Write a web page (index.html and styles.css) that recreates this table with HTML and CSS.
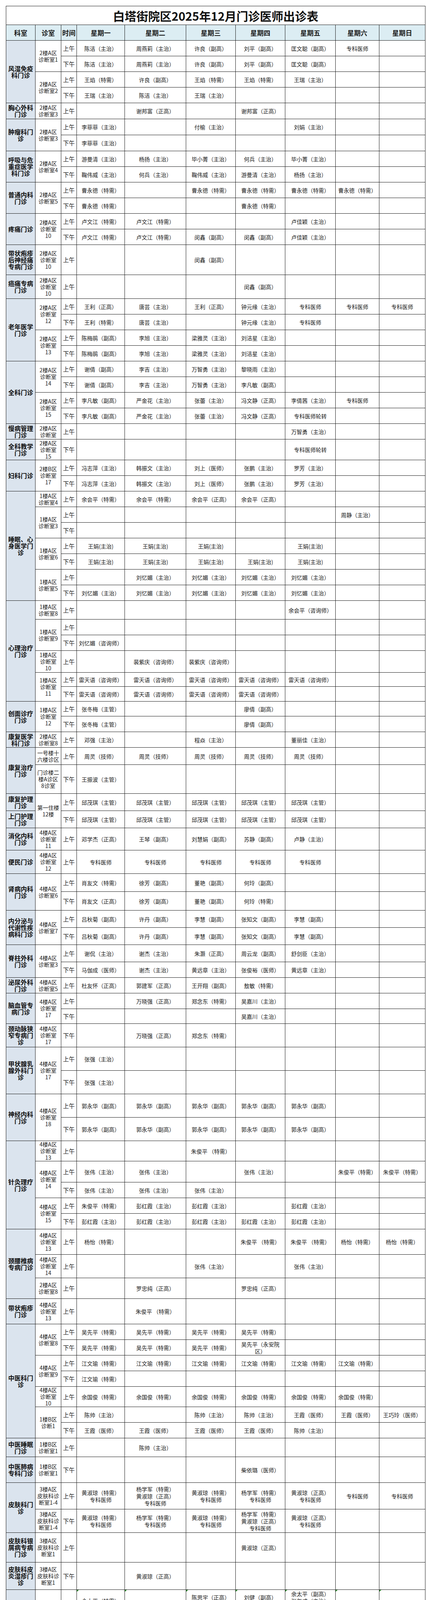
FILE: index.html
```html
<!DOCTYPE html>
<html lang="zh-CN">
<head>
<meta charset="utf-8">
<title>白塔街院区2025年12月门诊医师出诊表</title>
<link rel="stylesheet" href="styles.css">
</head>
<body>
<div class="sheet">
<table class="roster">
<colgroup>
<col class="c-dept"><col class="c-room"><col class="c-time"><col class="c-mon"><col class="c-tue"><col class="c-wed"><col class="c-thu"><col class="c-fri"><col class="c-sat"><col class="c-sun">
</colgroup>
<tbody>
<tr class="title h48"><td colspan="10">白塔街院区2025年12月门诊医师出诊表</td></tr>
<tr class="head h40"><td>科室</td><td>诊室</td><td>时间</td><td>星期一</td><td>星期二</td><td>星期三</td><td>星期四</td><td>星期五</td><td>星期六</td><td>星期日</td></tr>

<tr class="h40"><td class="d" rowspan="4">风湿免疫科门诊</td><td class="r" rowspan="2">2楼A区<br>诊断室1</td><td class="t">上午</td><td>陈洁（主治）</td><td>周燕莉（主治）</td><td>许良（副高）</td><td>刘平（副高）</td><td>匡文聪（副高）</td><td>专科医师</td><td></td></tr>
<tr class="h40"><td class="t">下午</td><td>陈洁（主治）</td><td>周燕莉（主治）</td><td>许良（副高）</td><td>刘平（副高）</td><td>匡文聪（副高）</td><td></td><td></td></tr>
<tr class="h40"><td class="r" rowspan="2">2楼A区<br>诊断室2</td><td class="t">上午</td><td>王焰（特需）</td><td>许良（副高）</td><td>王焰（特需）</td><td>王焰（特需）</td><td>王瑞（主治）</td><td></td><td></td></tr>
<tr class="h40"><td class="t">下午</td><td>王瑞（主治）</td><td>陈洁（主治）</td><td>王瑞（主治）</td><td></td><td></td><td></td><td></td></tr>

<tr class="h41"><td class="d">胸心外科门诊</td><td class="r">2楼A区<br>诊断室3</td><td class="t">上午</td><td></td><td>谢邦富（正高）</td><td></td><td>谢邦富（正高）</td><td></td><td></td><td></td></tr>

<tr class="h41"><td class="d" rowspan="2">肿瘤科门诊</td><td class="r" rowspan="2">2楼A区<br>诊断室3</td><td class="t">上午</td><td>李菲菲（主治）</td><td></td><td>付榆（主治）</td><td></td><td>刘娟（主治）</td><td></td><td></td></tr>
<tr class="h41"><td class="t">下午</td><td>李菲菲（主治）</td><td></td><td></td><td></td><td></td><td></td><td></td></tr>

<tr class="h40"><td class="d" rowspan="2">呼吸与危重症医学科门诊</td><td class="r" rowspan="2">2楼A区<br>诊断室4</td><td class="t">上午</td><td>游曼清（主治）</td><td>杨扬（主治）</td><td>毕小菁（主治）</td><td>何兵（主治）</td><td>毕小菁（主治）</td><td></td><td></td></tr>
<tr class="h40"><td class="t">下午</td><td>鞠伟威（主治）</td><td>何兵（主治）</td><td>鞠伟威（主治）</td><td>游曼清（主治）</td><td>杨扬（主治）</td><td></td><td></td></tr>

<tr class="h40"><td class="d" rowspan="2">普通内科门诊</td><td class="r" rowspan="2">2楼A区<br>诊断室5</td><td class="t">上午</td><td>曹永德（特需）</td><td></td><td>曹永德（特需）</td><td>曹永德（特需）</td><td>曹永德（特需）</td><td>曹永德（特需）</td><td></td></tr>
<tr class="h40"><td class="t">下午</td><td>曹永德（特需）</td><td></td><td></td><td>曹永德（特需）</td><td></td><td></td><td></td></tr>

<tr class="h40"><td class="d" rowspan="2">疼痛门诊</td><td class="r" rowspan="2">2楼A区<br>诊断室<br>10</td><td class="t">上午</td><td>卢文江（特需）</td><td>卢文江（特需）</td><td></td><td></td><td>卢佳颖（主治）</td><td></td><td></td></tr>
<tr class="h40"><td class="t">下午</td><td>卢文江（特需）</td><td>卢文江（特需）</td><td>闵鑫（副高）</td><td>闵鑫（副高）</td><td>卢佳颖（主治）</td><td></td><td></td></tr>

<tr class="h77"><td class="d">带状疱疹后神经痛专病门诊</td><td class="r">2楼A区<br>诊断室<br>10</td><td class="t">上午</td><td></td><td></td><td>闵鑫（副高）</td><td></td><td></td><td></td><td></td></tr>

<tr class="h61"><td class="d">癌痛专病门诊</td><td class="r">2楼A区<br>诊断室<br>10</td><td class="t">上午</td><td></td><td></td><td></td><td>闵鑫（副高）</td><td></td><td></td><td></td></tr>

<tr class="h40"><td class="d" rowspan="4">老年医学门诊</td><td class="r" rowspan="2">2楼A区<br>诊断室<br>12</td><td class="t">上午</td><td>王利（正高）</td><td>唐芸（主治）</td><td>王利（正高）</td><td>钟元缘（主治）</td><td>专科医师</td><td>专科医师</td><td>专科医师</td></tr>
<tr class="h40"><td class="t">下午</td><td>王利（特需）</td><td>唐芸（主治）</td><td></td><td>钟元缘（主治）</td><td>专科医师</td><td></td><td></td></tr>
<tr class="h40"><td class="r" rowspan="2">2楼A区<br>诊断室<br>13</td><td class="t">上午</td><td>陈梅鹃（副高）</td><td>李旭（主治）</td><td>梁雅灵（主治）</td><td>刘洁星（主治）</td><td></td><td></td><td></td></tr>
<tr class="h40"><td class="t">下午</td><td>陈梅鹃（副高）</td><td>李旭（主治）</td><td>梁雅灵（主治）</td><td>刘洁星（主治）</td><td></td><td></td><td></td></tr>

<tr class="h40"><td class="d" rowspan="4">全科门诊</td><td class="r" rowspan="2">2楼A区<br>诊断室<br>14</td><td class="t">上午</td><td>谢倩（副高）</td><td>李吉（主治）</td><td>万智勇（主治）</td><td>黎晓雨（主治）</td><td></td><td></td><td></td></tr>
<tr class="h40"><td class="t">下午</td><td>谢倩（副高）</td><td>李吉（主治）</td><td>万智勇（主治）</td><td>李凡敏（副高）</td><td></td><td></td><td></td></tr>
<tr class="h40"><td class="r" rowspan="2">2楼A区<br>诊断室<br>15</td><td class="t">上午</td><td>李凡敏（副高）</td><td>严金花（主治）</td><td>张蕾（主治）</td><td>冯文静（正高）</td><td>李倩茜（主治）</td><td>专科医师</td><td></td></tr>
<tr class="h40"><td class="t">下午</td><td>李凡敏（副高）</td><td>严金花（主治）</td><td>张蕾（主治）</td><td>冯文静（正高）</td><td>专科医师轮转</td><td></td><td></td></tr>

<tr class="h40"><td class="d">慢病管理门诊</td><td class="r">2楼A区<br>诊断室</td><td class="t">上午</td><td></td><td></td><td></td><td></td><td>万智勇（主治）</td><td></td><td></td></tr>

<tr class="h53"><td class="d">全科教学门诊</td><td class="r">2楼A区<br>诊断室<br>15</td><td class="t">下午</td><td></td><td></td><td></td><td></td><td>专科医师轮转</td><td></td><td></td></tr>

<tr class="h40"><td class="d" rowspan="2">妇科门诊</td><td class="r" rowspan="2">2楼B区<br>诊断室<br>17</td><td class="t">上午</td><td>冯志萍（主治）</td><td>韩振文（主治）</td><td>刘上（医师）</td><td>张鹏（主治）</td><td>罗芳（主治）</td><td></td><td></td></tr>
<tr class="h40"><td class="t">下午</td><td>冯志萍（主治）</td><td>韩振文（主治）</td><td>刘上（医师）</td><td>张鹏（主治）</td><td>罗芳（主治）</td><td></td><td></td></tr>

<tr class="h40"><td class="d" rowspan="7">睡眠、心身医学门诊</td><td class="r">1楼A区<br>诊断室4</td><td class="t">上午</td><td>余会平（特需）</td><td>余会平（特需）</td><td>余会平（正高）</td><td>余会平（正高）</td><td></td><td></td><td></td></tr>
<tr class="h40"><td class="r" rowspan="2">1楼A区<br>诊断室3</td><td class="t">上午</td><td></td><td></td><td></td><td></td><td></td><td>周静（主治）</td><td></td></tr>
<tr class="h40"><td class="t">下午</td><td></td><td></td><td></td><td></td><td></td><td></td><td></td></tr>
<tr class="h40"><td class="r" rowspan="2">1楼A区<br>诊断室6</td><td class="t">上午</td><td>王娟(主治)</td><td>王娟(主治)</td><td>王娟(主治)</td><td></td><td>王娟(主治)</td><td></td><td></td></tr>
<tr class="h40"><td class="t">下午</td><td>王娟(主治)</td><td>王娟(主治)</td><td>王娟(主治)</td><td>王娟(主治)</td><td>王娟(主治)</td><td></td><td></td></tr>
<tr class="h40"><td class="r" rowspan="2">1楼A区<br>诊断室5</td><td class="t">上午</td><td></td><td>刘忆媚（主治）</td><td>刘忆媚（主治）</td><td>刘忆媚（主治）</td><td>刘忆媚（主治）</td><td></td><td></td></tr>
<tr class="h40"><td class="t">下午</td><td>刘忆媚（主治）</td><td>刘忆媚（主治）</td><td>刘忆媚（主治）</td><td>刘忆媚（主治）</td><td>刘忆媚（主治）</td><td></td><td></td></tr>

<tr class="h48"><td class="d" rowspan="6">心理治疗门诊</td><td class="r">1楼A区<br>诊断室8</td><td class="t">上午</td><td></td><td></td><td></td><td></td><td>余会平（咨询师）</td><td></td><td></td></tr>
<tr class="h40"><td class="r" rowspan="2">1楼A区<br>诊断室9</td><td class="t">上午</td><td></td><td></td><td></td><td></td><td></td><td></td><td></td></tr>
<tr class="h40"><td class="t">下午</td><td>刘忆媚（咨询师）</td><td></td><td></td><td></td><td></td><td></td><td></td></tr>
<tr class="h56"><td class="r">1楼A区<br>诊断室<br>10</td><td class="t">上午</td><td></td><td>裴紫庆（咨询师）</td><td>裴紫庆（咨询师）</td><td></td><td></td><td></td><td></td></tr>
<tr class="h36"><td class="r" rowspan="2">1楼A区<br>诊断室<br>11</td><td class="t">上午</td><td>雷天语（咨询师）</td><td>雷天语（咨询师）</td><td>雷天语（咨询师）</td><td>雷天语（咨询师）</td><td>雷天语（咨询师）</td><td></td><td></td></tr>
<tr class="h38"><td class="t">下午</td><td>雷天语（咨询师）</td><td>雷天语（咨询师）</td><td>雷天语（咨询师）</td><td>雷天语（咨询师）</td><td></td><td></td><td></td></tr>

<tr class="h38"><td class="d" rowspan="2">创面诊疗门诊</td><td class="r" rowspan="2">1楼A区<br>诊断室<br>12</td><td class="t">上午</td><td>张冬梅（主管）</td><td></td><td></td><td>廖倩（副高）</td><td></td><td></td><td></td></tr>
<tr class="h40"><td class="t">下午</td><td>张冬梅（主管）</td><td></td><td></td><td>廖倩（副高）</td><td></td><td></td><td></td></tr>

<tr class="h40"><td class="d">康复医学科门诊</td><td class="r">2楼A区<br>诊断室8</td><td class="t">上午</td><td>邓强（主治）</td><td></td><td>程焱（主治）</td><td></td><td>董丽佳（主治）</td><td></td><td></td></tr>

<tr class="h44"><td class="d" rowspan="2">康复治疗门诊</td><td class="r">一号楼十<br>六楼诊区</td><td class="t">上午</td><td>周灵（技师）</td><td>周灵（技师）</td><td>周灵（技师）</td><td>周灵（技师）</td><td>周灵（技师）</td><td></td><td></td></tr>
<tr class="h74"><td class="r">门诊楼二<br>楼A诊区<br>8诊室</td><td class="t">下午</td><td>王振波（主管）</td><td></td><td></td><td></td><td></td><td></td><td></td></tr>

<tr class="h44"><td class="d">康复护理门诊</td><td class="r" rowspan="2">第一住楼<br>12楼</td><td class="t">上午</td><td>邱茂琪（主管）</td><td>邱茂琪（主管）</td><td>邱茂琪（主管）</td><td>邱茂琪（主管）</td><td>邱茂琪（主管）</td><td></td><td></td></tr>
<tr class="h44"><td class="d">上门护理门诊</td><td class="t">下午</td><td>邱茂琪（主管）</td><td>邱茂琪（主管）</td><td>邱茂琪（主管）</td><td>邱茂琪（主管）</td><td>邱茂琪（主管）</td><td></td><td></td></tr>

<tr class="h57"><td class="d">消化内科门诊</td><td class="r">4楼A区<br>诊断室<br>11</td><td class="t">上午</td><td>邓学杰（正高）</td><td>王琴（副高）</td><td>刘慧娟（副高）</td><td>苏静（副高）</td><td>卢静（主治）</td><td></td><td></td></tr>

<tr class="h60"><td class="d">便民门诊</td><td class="r">4楼A区<br>诊断室<br>12</td><td class="t">上午</td><td>专科医师</td><td>专科医师</td><td>专科医师</td><td>专科医师</td><td>专科医师</td><td></td><td></td></tr>

<tr class="h46"><td class="d" rowspan="2">肾病内科门诊</td><td class="r" rowspan="2">4楼A区<br>诊断室6</td><td class="t">上午</td><td>肖友文（特需）</td><td>徐芳（副高）</td><td>董艳（副高）</td><td>何玲（副高）</td><td></td><td></td><td></td></tr>
<tr class="h48"><td class="t">下午</td><td>肖友文（正高）</td><td>徐芳（副高）</td><td>董艳（副高）</td><td>何玲（特需）</td><td></td><td></td><td></td></tr>

<tr class="h44"><td class="d" rowspan="2">内分泌与代谢性疾病科门诊</td><td class="r" rowspan="2">4楼A区<br>诊断室7</td><td class="t">上午</td><td>吕秋菊（副高）</td><td>许丹（副高）</td><td>李慧（副高）</td><td>张知文（副高）</td><td>李慧（副高）</td><td></td><td></td></tr>
<tr class="h44"><td class="t">下午</td><td>吕秋菊（副高）</td><td>许丹（副高）</td><td>李慧（副高）</td><td>张知文（副高）</td><td>李慧（副高）</td><td></td><td></td></tr>

<tr class="h44"><td class="d" rowspan="2">脊柱外科门诊</td><td class="r" rowspan="2">4楼A区<br>诊断室3</td><td class="t">上午</td><td>谢侃（主治）</td><td>谢杰（主治）</td><td>朱灏（正高）</td><td>周云龙（副高）</td><td>舒剑臣（主治）</td><td></td><td></td></tr>
<tr class="h40"><td class="t">下午</td><td>马伽成（医师）</td><td>谢杰（主治）</td><td>黄远章（主治）</td><td>张俊裕（医师）</td><td>黄远章（主治）</td><td></td><td></td></tr>

<tr class="h40"><td class="d">泌尿外科门诊</td><td class="r">4楼A区<br>诊断室5</td><td class="t">上午</td><td>杜友怀（正高）</td><td>郭建军（正高）</td><td>王开翔（副高）</td><td>敖敏（特需）</td><td></td><td></td><td></td></tr>

<tr class="h40"><td class="d" rowspan="2">脑血管专病门诊</td><td class="r" rowspan="2">4楼A区<br>诊断室<br>17</td><td class="t">上午</td><td></td><td>万晓强（正高）</td><td>郑念东（特需）</td><td>吴嘉川（主治）</td><td></td><td></td><td></td></tr>
<tr class="h38"><td class="t">下午</td><td></td><td></td><td></td><td>吴嘉川（主治）</td><td></td><td></td><td></td></tr>

<tr class="h60"><td class="d">颈动脉狭窄专病门诊</td><td class="r">4楼A区<br>诊断室<br>17</td><td class="t">下午</td><td></td><td>万晓强（正高）</td><td>郑念东（特需）</td><td></td><td></td><td></td><td></td></tr>

<tr class="h60"><td class="d" rowspan="2">甲状腺乳腺外科门诊</td><td class="r" rowspan="2">4楼A区<br>诊断室<br>17</td><td class="t">上午</td><td>张强（主治）</td><td></td><td></td><td></td><td></td><td></td><td></td></tr>
<tr class="h60"><td class="t">下午</td><td>张强（主治）</td><td></td><td></td><td></td><td></td><td></td><td></td></tr>

<tr class="h60"><td class="d" rowspan="2">神经内科门诊</td><td class="r" rowspan="2">4楼A区<br>诊断室<br>18</td><td class="t">上午</td><td>郭永华（副高）</td><td>郭永华（副高）</td><td>郭永华（副高）</td><td>郭永华（副高）</td><td>郭永华（副高）</td><td></td><td></td></tr>
<tr class="h60"><td class="t">下午</td><td>郭永华（副高）</td><td>郭永华（副高）</td><td>郭永华（副高）</td><td>郭永华（副高）</td><td>郭永华（副高）</td><td></td><td></td></tr>

<tr class="h52"><td class="d" rowspan="5">针灸理疗门诊</td><td class="r">4楼A区<br>诊断室<br>13</td><td class="t">上午</td><td></td><td></td><td>朱俊平 （特需）</td><td></td><td></td><td></td><td></td></tr>
<tr class="h54"><td class="r" rowspan="2">4楼A区<br>诊断室<br>14</td><td class="t">上午</td><td>张伟（主治）</td><td>张伟（主治）</td><td></td><td>张伟（主治）</td><td></td><td>朱俊平（特需）</td><td>朱俊平（特需）</td></tr>
<tr class="h40"><td class="t">下午</td><td>张伟（主治）</td><td>张伟（主治）</td><td>张伟（主治）</td><td></td><td></td><td></td><td></td></tr>
<tr class="h40"><td class="r" rowspan="2">4楼A区<br>诊断室<br>15</td><td class="t">上午</td><td>朱俊平（特需）</td><td>彭红霞（主治）</td><td>彭红霞（主治）</td><td></td><td>彭红霞（主治）</td><td></td><td></td></tr>
<tr class="h40"><td class="t">下午</td><td>彭红霞（主治）</td><td>彭红霞（主治）</td><td>彭红霞（主治）</td><td>彭红霞（主治）</td><td>彭红霞（主治）</td><td></td><td></td></tr>

<tr class="h65"><td class="d" rowspan="3">颈腰椎病专病门诊</td><td class="r">4楼A区<br>诊断室<br>13</td><td class="t">上午</td><td>杨怡（特需）</td><td></td><td></td><td>朱俊平 （特需）</td><td>朱俊平 （特需）</td><td>杨怡（特需）</td><td>杨怡（特需）</td></tr>
<tr class="h60"><td class="r">4楼A区<br>诊断室<br>14</td><td class="t">上午</td><td></td><td></td><td>张伟（主治）</td><td></td><td>张伟（主治）</td><td></td><td></td></tr>
<tr class="h53"><td class="r">2楼A区<br>诊断室8</td><td class="t">上午</td><td></td><td>罗忠纯（正高）</td><td></td><td>罗忠纯（正高）</td><td></td><td></td><td></td></tr>

<tr class="h65"><td class="d">带状疱疹门诊</td><td class="r">4楼A区<br>诊断室<br>13</td><td class="t">上午</td><td></td><td>朱俊平 （特需）</td><td></td><td></td><td></td><td></td><td></td></tr>

<tr class="h40"><td class="d" rowspan="7">中医科门诊</td><td class="r" rowspan="2">4楼A区<br>诊断室8</td><td class="t">上午</td><td>吴先平（特需）</td><td>吴先平（特需）</td><td>吴先平（特需）</td><td>吴先平（特需）</td><td></td><td></td><td></td></tr>
<tr class="h40"><td class="t">下午</td><td>吴先平（特需）</td><td>吴先平（特需）</td><td>吴先平（特需）</td><td>吴先平（永安院<br>区）</td><td></td><td></td><td></td></tr>
<tr class="h40"><td class="r" rowspan="2">4楼A区<br>诊断室9</td><td class="t">上午</td><td>江文瑜（特需）</td><td>江文瑜（特需）</td><td>江文瑜（特需）</td><td>江文瑜（特需）</td><td>江文瑜（特需）</td><td>江文瑜（特需）</td><td></td></tr>
<tr class="h40"><td class="t">下午</td><td>江文瑜（特需）</td><td></td><td></td><td></td><td></td><td></td><td></td></tr>
<tr class="h52"><td class="r">4楼A区<br>诊断室<br>10</td><td class="t">上午</td><td>余国俊（特需）</td><td>余国俊（特需）</td><td>余国俊（特需）</td><td>余国俊（特需）</td><td>余国俊（特需）</td><td>余国俊（特需）</td><td></td></tr>
<tr class="h40"><td class="r" rowspan="2">1楼B区<br>诊断1</td><td class="t">上午</td><td>陈帅（主治）</td><td></td><td>陈帅（主治）</td><td>陈帅（主治）</td><td>王霞（医师）</td><td>王霞（医师）</td><td>王巧玲（医师）</td></tr>
<tr class="h40"><td class="t">下午</td><td>王霞（医师）</td><td>王霞（医师）</td><td>王霞（医师）</td><td>王霞（医师）</td><td>陈帅（主治）</td><td></td><td></td></tr>

<tr class="h48"><td class="d">中医睡眠门诊</td><td class="r">1楼B区<br>诊断室1</td><td class="t">上午</td><td></td><td>陈帅（主治）</td><td></td><td></td><td></td><td></td><td></td></tr>

<tr class="h66"><td class="d">中医肺病专科门诊</td><td class="r">1楼B区<br>诊断室1</td><td class="t">下午</td><td></td><td></td><td></td><td>柴依璐（医师）</td><td></td><td></td><td></td></tr>

<tr class="h68"><td class="d" rowspan="2">皮肤科门诊</td><td class="r">3楼A区<br>皮肤科诊<br>断室1-4</td><td class="t">上午</td><td>黄淑琼（特需）<br>专科医师</td><td>杨学军（特需）<br>黄淑琼（正高）<br>专科医师</td><td>黄淑琼（特需）<br>专科医师</td><td>杨学军（特需）<br>专科医师</td><td>黄淑琼（正高）<br>专科医师</td><td>专科医师</td><td>专科医师</td></tr>
<tr class="h60"><td class="r">3楼A区<br>皮肤科诊<br>断室1-4</td><td class="t">下午</td><td>黄淑琼（特需）<br>专科医师</td><td>杨学军（特需）<br>专科医师</td><td>黄淑琼（特需）<br>专科医师</td><td>杨学军（特需）<br>黄淑琼（正高）<br>专科医师</td><td>黄淑琼（正高）<br>专科医师</td><td></td><td></td></tr>

<tr class="h76"><td class="d">皮肤科银屑病专病门诊</td><td class="r">3楼A区<br>皮肤科诊<br>断室1</td><td class="t">上午</td><td></td><td></td><td></td><td>黄淑琼（正高）</td><td></td><td></td><td></td></tr>

<tr class="h70"><td class="d">皮肤科皮炎湿疹门诊</td><td class="r">3楼A区<br>皮肤科诊<br>断室1</td><td class="t">下午</td><td></td><td>黄淑琼（正高）</td><td></td><td></td><td></td><td></td><td></td></tr>

<tr class="h128"><td class="d" rowspan="2">口腔科门诊</td><td class="r" rowspan="2">3楼B区<br>口腔诊断<br>室</td><td class="t">上午</td><td class="cm">余太平（特需）<br>刘健（副高）<br>陈思宇（正高）<br>兰竺（主治）<br>专科医师</td><td class="cm">刘健（副高）<br>陈思宇（正高）<br>兰竺（主治）<br>专科医生</td><td class="cm">陈思宇（正高）<br>尹鹏（主治）<br>张年成（主治）<br>潘莲（主治）<br>季于琪（主治）<br>专科医师</td><td class="cm">刘健（副高）<br>张年成（主治）<br>尹鹏（主治）<br>潘莲（主治）<br>季于琪（主治）<br>专科医师</td><td class="cm">余太平（副高）<br>张年成（主治）<br>兰竺（主治）<br>尹鹏（主治）<br>潘莲（主治）<br>季于琪（主治）<br>专科医师</td><td class="cm">专科医师</td><td class="cm">专科医师</td></tr>
<tr class="h112"><td class="t">下午</td><td class="cm">余太平（副高）<br>刘健（副高）<br>陈思宇（正高）<br>兰竺（主治）<br>专科医师</td><td class="cm">刘健（副高）<br>陈思宇（正高）<br>兰竺（主治）<br>专科医生</td><td class="cm">陈思宇（正高）<br>尹鹏（主治）<br>张年成（主治）<br>潘莲（主治）<br>季于琪（主治）<br>专科医师</td><td class="cm">刘健（副高）<br>张年成（主治）<br>尹鹏（主治）<br>潘莲（主治）<br>季于琪（主治）<br>专科医师</td><td class="cm">张年成（主治）<br>兰竺（主治）<br>尹鹏（主治）<br>潘莲（主治）<br>季于琪（主治）<br>专科医师</td><td class="cm">专科医师</td><td class="cm">专科医师</td></tr>

<tr class="h40"><td class="d" rowspan="2">眼科门诊</td><td class="r" rowspan="2">3楼A区<br>眼科诊断<br>室6</td><td class="t">上午</td><td>王玲（主治）</td><td>王玲（主治）</td><td>王玲（主治）</td><td>王玲（主治）</td><td>王玲（主治）</td><td></td><td></td></tr>
<tr class="h40"><td class="t">下午</td><td>王玲（主治）</td><td>王玲（主治）</td><td>王玲（主治）</td><td>王玲（主治）</td><td>王玲（主治）</td><td></td><td></td></tr>

<tr class="h69"><td class="d" rowspan="2">健康管理门诊</td><td class="r">5楼A区<br>A05室</td><td class="t">上午</td><td>李伟钦（正高）</td><td>李伟钦（正高）</td><td>李伟钦（正高）</td><td>李伟钦（正高）</td><td>李伟钦（正高）</td><td></td><td></td></tr>
<tr class="h54"><td class="r">4楼健康<br>管理门诊</td><td class="t">下午</td><td>李伟钦（正高）</td><td>李伟钦（正高）</td><td>李伟钦（正高）</td><td>李伟钦（正高）</td><td></td><td></td><td></td></tr>

<tr class="note h54"><td colspan="10">专家专科门诊有临时停、替诊、变动等情况，请以实际出诊医师为准。</td></tr>
</tbody>
</table>
</div>
</body>
</html>
```
FILE: styles.css
```css
* { box-sizing: border-box; }
html, body { margin: 0; padding: 0; background: #ffffff; }
body {
  font-family: "Noto Sans CJK SC", "Liberation Sans", sans-serif;
  color: #111;
}
.sheet { padding: 15px 0 0 15px; }
.roster {
  border-collapse: collapse;
  table-layout: fixed;
  width: 1074px;
  border: 1.5px solid #111;
}
.c-dept { width: 75px; }
.c-room { width: 66px; }
.c-time { width: 40px; }
.c-mon { width: 123px; }
.c-tue { width: 157px; }
.c-wed { width: 127px; }
.c-thu { width: 127px; }
.c-fri { width: 129px; }
.c-sat { width: 112px; }
.c-sun { width: 118px; }

.roster td {
  border: 1px solid #1c1c1c;
  text-align: center;
  vertical-align: middle;
  padding: 0 1px;
  font-size: 14px;
  line-height: 18px;
  font-weight: 400;
  color: #1a1a1a;
  position: relative;
}
.roster .title td {
  font-size: 30px;
  line-height: 34px;
  font-weight: 700;
  color: #111;
}
.roster .head td {
  background: #dcedf3;
  font-size: 17px;
  font-weight: 700;
}
.roster td.d {
  background: #dbe4ee;
  font-size: 16px;
  line-height: 17px;
  font-weight: 700;
  padding: 0 3px;
  color: #111;
}
.roster td.r { font-size: 14px; line-height: 17px; padding: 0; }
.roster td.t { font-size: 15px; padding: 0; }
.roster td.cm::before {
  content: "";
  position: absolute;
  left: 0;
  top: 0;
  border-top: 5px solid #2e8b2e;
  border-right: 5px solid transparent;
}
.roster .note td {
  text-align: left;
  font-size: 16px;
  font-weight: 700;
  padding: 0 4px;
}

.h36 > td { height: 36px; }
.h38 > td { height: 38px; }
.h40 > td { height: 40px; }
.h41 > td { height: 41px; }
.h44 > td { height: 44px; }
.h46 > td { height: 46px; }
.h48 > td { height: 48px; }
.h52 > td { height: 52px; }
.h53 > td { height: 53px; }
.h54 > td { height: 54px; }
.h56 > td { height: 56px; }
.h57 > td { height: 57px; }
.h60 > td { height: 60px; }
.h61 > td { height: 61px; }
.h65 > td { height: 65px; }
.h66 > td { height: 66px; }
.h68 > td { height: 68px; }
.h69 > td { height: 69px; }
.h70 > td { height: 70px; }
.h74 > td { height: 74px; }
.h76 > td { height: 76px; }
.h77 > td { height: 77px; }
.h112 > td { height: 112px; }
.h128 > td { height: 128px; }
```
